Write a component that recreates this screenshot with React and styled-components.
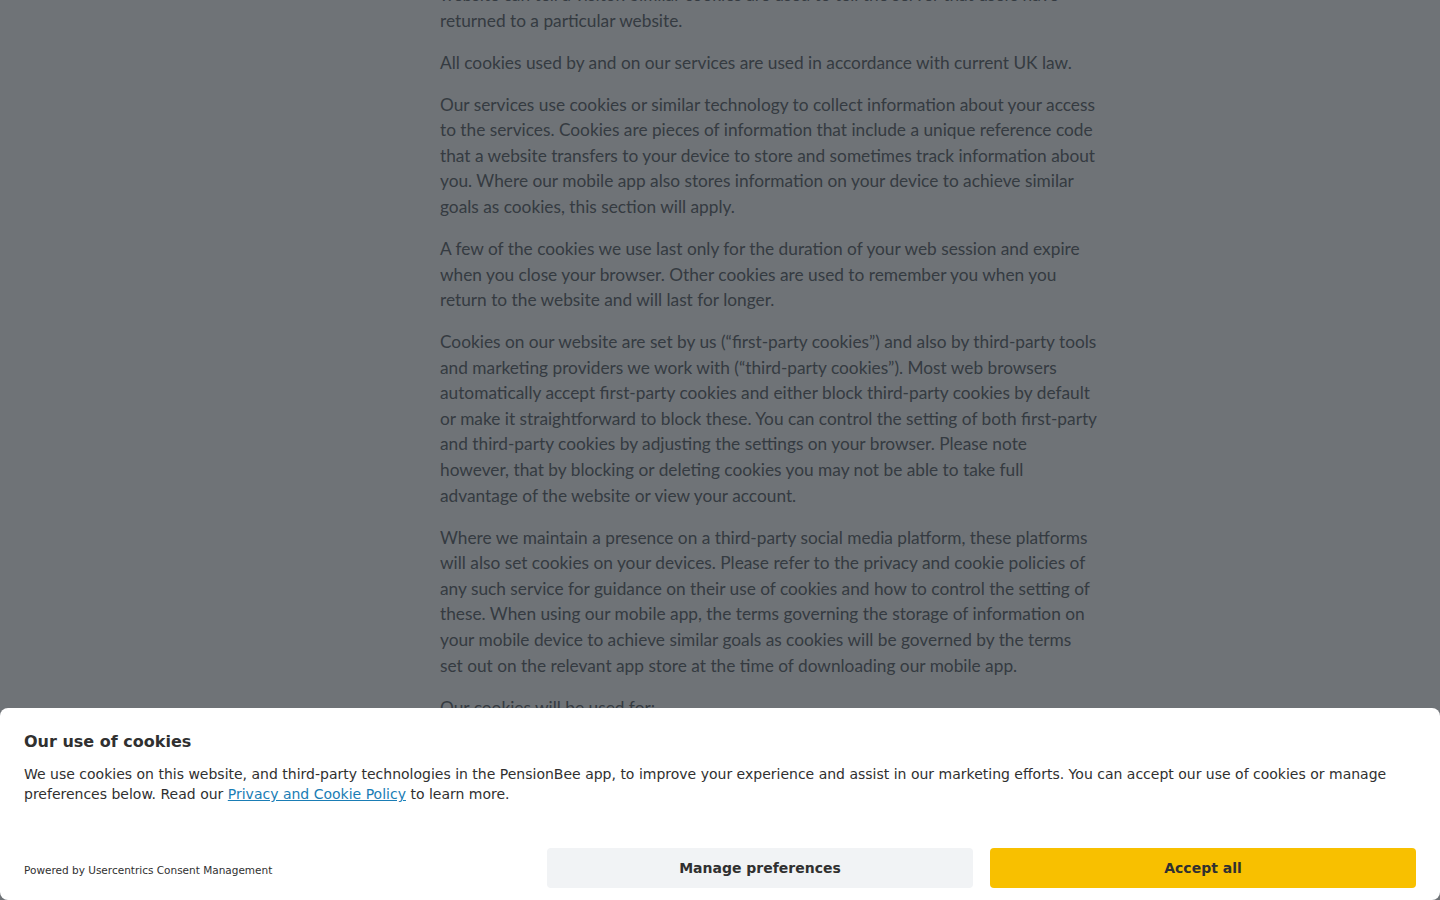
import React from 'react'
import styled, { createGlobalStyle } from 'styled-components'

const GlobalStyle = createGlobalStyle`
html, body {
  margin: 0;
  padding: 0;
  height: 100%;
  overflow: hidden;
  background: #ffffff;
}
* { box-sizing: border-box; }
`

const Page = styled.div`
display: grid;
grid-template-columns: 440px 657px 1fr;
height: 900px;
overflow: hidden;
`

const Article = styled.article`
grid-column: 2;
margin-top: -18px;
font-family: Lato, "Open Sans", sans-serif;
font-size: 17.3px;
line-height: 25.6px;
color: #6e7378;
`

const Para = styled.p`
margin: 0 0 16.4px;
`

const List = styled.ul`
margin: 0;
padding-left: 24px;
`

const Overlay = styled.div`
position: fixed;
inset: 0;
background: rgba(15, 22, 28, 0.6);
`

const Banner = styled.section`
position: fixed;
left: 0;
right: 0;
bottom: 0;
height: 192px;
background: #ffffff;
border-radius: 8px;
padding: 22px 24px 12px;
display: flex;
flex-direction: column;
font-family: "DejaVu Sans", Verdana, sans-serif;
color: #303030;
`

const Title = styled.h2`
margin: 0;
font-size: 16px;
line-height: 24px;
font-weight: 700;
`

const Message = styled.p`
margin: 10px 0 0;
font-size: 14px;
line-height: 20px;
color: #303030;
`

const PolicyLink = styled.a`
color: #1a7db5;
text-decoration: underline;
`

const Footer = styled.div`
margin-top: auto;
display: flex;
align-items: center;
`

const Powered = styled.span`
flex: 1;
font-size: 10.5px;
line-height: 14px;
padding-top: 4px;
color: #303030;
`

const Buttons = styled.div`
display: flex;
gap: 17px;
`

const Button = styled.button`
width: 426px;
height: 40px;
border: none;
border-radius: 4px;
font-family: "DejaVu Sans", Verdana, sans-serif;
font-size: 14px;
font-weight: 700;
color: #303030;
cursor: pointer;
background-color: ${(props) => (props.primary ? '#f8c000' : '#f1f3f5')};
`

const paragraphs = [
  'website can tell a visitor. Similar cookies are used to tell the server that users have returned to a particular website.',
  'All cookies used by and on our services are used in accordance with current UK law.',
  'Our services use cookies or similar technology to collect information about your access to the services. Cookies are pieces of information that include a unique reference code that a website transfers to your device to store and sometimes track information about you. Where our mobile app also stores information on your device to achieve similar goals as cookies, this section will apply.',
  'A few of the cookies we use last only for the duration of your web session and expire when you close your browser. Other cookies are used to remember you when you return to the website and will last for longer.',
  'Cookies on our website are set by us (“first-party cookies”) and also by third-party tools and marketing providers we work with (“third-party cookies”). Most web browsers automatically accept first-party cookies and either block third-party cookies by default or make it straightforward to block these. You can control the setting of both first-party and third-party cookies by adjusting the settings on your browser. Please note however, that by blocking or deleting cookies you may not be able to take full advantage of the website or view your account.',
  'Where we maintain a presence on a third-party social media platform, these platforms will also set cookies on your devices. Please refer to the privacy and cookie policies of any such service for guidance on their use of cookies and how to control the setting of these. When using our mobile app, the terms governing the storage of information on your mobile device to achieve similar goals as cookies will be governed by the terms set out on the relevant app store at the time of downloading our mobile app.',
  'Our cookies will be used for:',
]

const App = () => {
  return (
    <>
      <GlobalStyle />
      <Page>
        <Article>
          {paragraphs.map((text, i) => (
            <Para key={i}>{text}</Para>
          ))}
          <List>
            <li>Essential session management</li>
            <li>Functionality</li>
            <li>Analytics and performance</li>
          </List>
        </Article>
      </Page>
      <Overlay />
      <Banner>
        <Title>Our use of cookies</Title>
        <Message>
          We use cookies on this website, and third-party technologies in the PensionBee app, to improve your experience and assist in our marketing efforts. You can accept our use of cookies or manage preferences below. Read our{' '}
          <PolicyLink href="#">Privacy and Cookie Policy</PolicyLink> to learn more.
        </Message>
        <Footer>
          <Powered>Powered by Usercentrics Consent Management</Powered>
          <Buttons>
            <Button>Manage preferences</Button>
            <Button primary>Accept all</Button>
          </Buttons>
        </Footer>
      </Banner>
    </>
  )
}

export default App
